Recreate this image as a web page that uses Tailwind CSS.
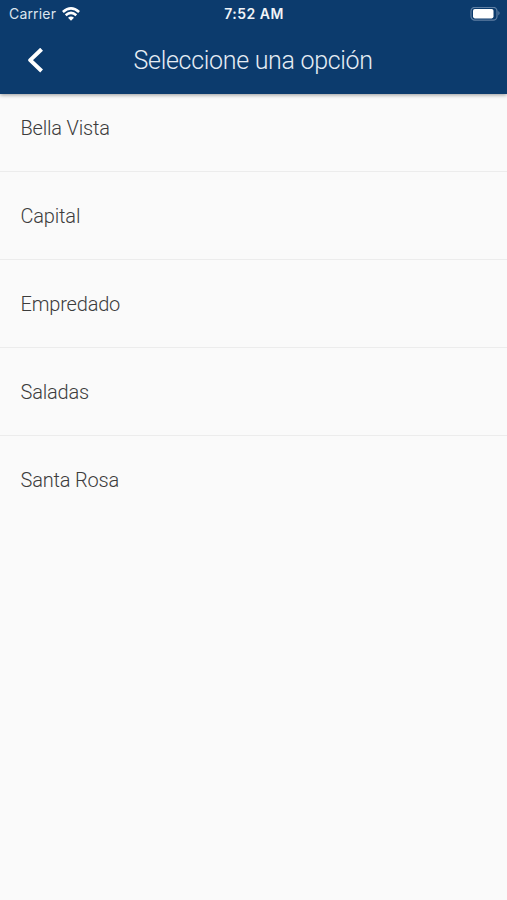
<!DOCTYPE html>
<html lang="es">
<head>
<meta charset="utf-8">
<title>Seleccione una opción</title>
<script src="https://cdn.jsdelivr.net/npm/@tailwindcss/browser@4"></script>
</head>
<body class="bg-[#fafafa] font-['Roboto',sans-serif]">
<div class="h-[900px] w-[507px] overflow-hidden">
  <header class="relative h-[94px] bg-[#0c3b6d] text-white shadow-[0_1px_4px_rgba(0,0,0,0.4)]">
    <div class="grid h-[27px] grid-cols-3 items-center pr-[6px] pl-[9px] font-['Inter',sans-serif] text-[14px]">
      <div class="flex items-center gap-[6px] text-[#dce5ee]">
        <span class="tracking-[0.17px]">Carrier</span>
        <svg class="h-[14px] w-[18px]" viewBox="0 0 18 14" fill="none" stroke="white" stroke-width="2.6"><path d="M.9 5Q9-2.2 17.1 5M3.7 8.2Q9 3.6 14.3 8.2"/><path d="M6 10.8Q9 8.2 12 10.8L9 13.8Z" fill="white" stroke="none"/></svg>
      </div>
      <span class="pr-[2px] text-center font-semibold tracking-[0.5px] whitespace-nowrap text-[#f0f4f8]">7:52 AM</span>
      <svg class="h-[14px] w-[31px] justify-self-end" viewBox="0 0 31 14"><rect x="1" y=".3" width="26" height="12.8" rx="3.8" fill="none" stroke="#5f7fa3" stroke-width="1.2"/><rect x="3" y="2" width="20.5" height="9.4" rx="1.8" fill="white"/><path d="M28.3 4.1Q31 6.2 28.3 8.6Z" fill="#5f7fa3"/></svg>
    </div>
    <div class="flex h-[67px] items-center">
      <svg class="ml-[27px] h-[26px] w-[17px]" viewBox="0 0 17 26" fill="none" stroke="white" stroke-width="4" stroke-linejoin="round"><path d="M14.6 1.2 3.2 12.1 14.6 23"/></svg>
      <h1 class="ml-[89.5px] text-[25px] font-light tracking-[-0.3px] whitespace-nowrap text-[#e6edf4]">Seleccione una opción</h1>
    </div>
  </header>
  <ul class="text-[20px] font-light tracking-[-0.18px] text-[#3c3c3c]">
    <li class="flex h-[78px] items-center border-b border-[#ececec] px-[20.5px] pb-[9px]">Bella Vista</li>
    <li class="flex h-[88px] items-center border-b border-[#ececec] px-[20.5px]">Capital</li>
    <li class="flex h-[88px] items-center border-b border-[#ececec] px-[20.5px]">Empredado</li>
    <li class="flex h-[88px] items-center border-b border-[#ececec] px-[20.5px]">Saladas</li>
    <li class="flex h-[88px] items-center px-[20.5px]">Santa Rosa</li>
  </ul>
</div>
</body>
</html>
